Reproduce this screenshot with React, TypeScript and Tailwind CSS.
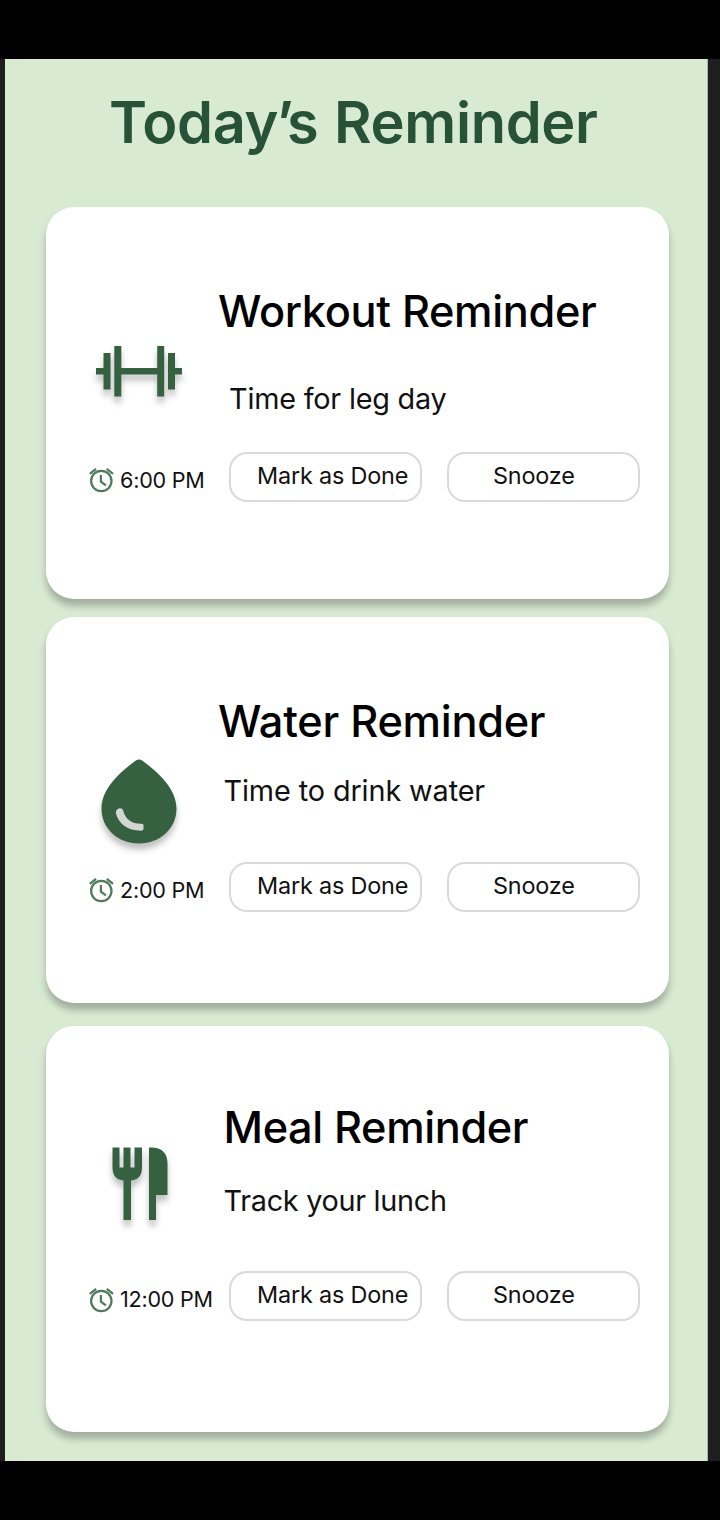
import type { ReactNode } from "react";

const iconShadow = "block drop-shadow-[0_6px_3px_rgba(0,0,0,0.25)]";

function DumbbellIcon() {
  return (
    <svg width="86" height="51" viewBox="0 0 86 51" fill="#356140" className={iconShadow}>
      <path d="M0 22h7.5v6.5H0zM7.5 7h7v36.5h-7zM18.3 0h7v50.5h-7zM25.3 22h36v6.5h-36zM61.2 0h7v50.5h-7zM72 7h7v36.5h-7zM79 22h7v6.5h-7z" />
    </svg>
  );
}

function DropIcon() {
  return (
    <svg width="76" height="85" viewBox="0 0 76 85" className={iconShadow}>
      <path
        fill="#356140"
        d="M34.5 1.8Q38 -1 41.5 1.8C57 13 75.5 30 75.5 49.5C75.5 69.5 59 84.5 38 84.5S0.5 69.5 0.5 49.5C0.5 30 19 13 34.5 1.8Z"
      />
      <path
        fill="#d4d6d4"
        d="M18 49.5C16 50 14.5 51.7 15 54.5C17.5 65 27 71.5 39.5 71.7Q42.5 71.7 42.5 69.5V66Q42.5 64.6 40 64.7C31 64.8 24.5 60.5 22.3 52C21.8 50 20.3 49 18 49.5Z"
      />
    </svg>
  );
}

function MealIcon() {
  return (
    <svg width="56" height="74" viewBox="0 0 56 74" fill="#356140" className={iconShadow}>
      <path d="M0.5 0.5h7v20h4v-20h7v20h4v-20h7.5v20q0 12-11 13v39.5h-7.5V33.5q-11-1-11-13z" />
      <path d="M37 0.5h2q16.5 0 16.5 16.5v31H44v25h-7z" />
    </svg>
  );
}

function AlarmIcon({ className }: { className: string }) {
  return (
    <svg
      width="26"
      height="26"
      viewBox="0 0 26 26"
      fill="none"
      stroke="#4f7a5b"
      strokeWidth="2.2"
      className={`shrink-0 ${className}`}
    >
      <circle cx="12.3" cy="14" r="10.2" />
      <path d="M11.9 8v6.6l5 3.8M0.8 6.8l6.2-5M17.8 1.8l6.2 5" />
    </svg>
  );
}

type Reminder = {
  title: string;
  note: string;
  time: string;
  icon: ReactNode;
  card: string;
  iconPad: string;
  body: string;
  titleClass: string;
  noteClass: string;
  alarmClass: string;
};

const reminders: Reminder[] = [
  {
    title: "Workout Reminder",
    note: "Time for leg day",
    time: "6:00 PM",
    icon: <DumbbellIcon />,
    card: "h-[392px]",
    iconPad: "pt-[139px] pl-[50px]",
    body: "pt-[78px]",
    titleClass: "ml-[-11px] tracking-[-0.33px]",
    noteClass: "mt-[44px] ml-0 tracking-[-0.2px]",
    alarmClass: "mt-0",
  },
  {
    title: "Water Reminder",
    note: "Time to drink water",
    time: "2:00 PM",
    icon: <DropIcon />,
    card: "mt-[18px] h-[386px]",
    iconPad: "pt-[142px] pl-[55px]",
    body: "pt-[78px]",
    titleClass: "ml-[-11px] tracking-[-0.26px]",
    noteClass: "mt-[26px] ml-[-5.5px] tracking-[-0.1px]",
    alarmClass: "mt-0",
  },
  {
    title: "Meal Reminder",
    note: "Track your lunch",
    time: "12:00 PM",
    icon: <MealIcon />,
    card: "mt-[23px] h-[406px]",
    iconPad: "pt-[121px] pl-[66px]",
    body: "pt-[75px]",
    titleClass: "ml-[-5.5px] tracking-[-0.38px]",
    noteClass: "mt-[30px] ml-[-5.5px] tracking-[-0.28px]",
    alarmClass: "mt-[2px]",
  },
];

function ReminderCard({ item }: { item: Reminder }) {
  return (
    <section
      className={`flex w-[623px] flex-col rounded-[28px] bg-white shadow-[0_7px_7px_rgba(0,0,0,0.25)] ${item.card}`}
    >
      <div className="flex h-[245px] shrink-0">
        <div className={`w-[183px] shrink-0 ${item.iconPad}`}>{item.icon}</div>
        <div className={`whitespace-nowrap ${item.body}`}>
          <h2 className={`text-[43.3px] leading-[52px] font-medium text-black ${item.titleClass}`}>
            {item.title}
          </h2>
          <p className={`text-[28.8px] leading-[36px] text-[#111] ${item.noteClass}`}>{item.note}</p>
        </div>
      </div>
      <div className="flex h-[50px] shrink-0">
        <div className="flex w-[183px] shrink-0 items-center gap-[5px] pt-[6px] pl-[43px] text-[21.6px] tracking-[-0.24px] whitespace-nowrap text-[#111]">
          <AlarmIcon className={item.alarmClass} />
          <span>{item.time}</span>
        </div>
        <button className="h-[50px] w-[193px] shrink-0 rounded-[18px] border-2 border-[#dadada] pb-[2px] pl-[26px] text-left text-[23.4px] leading-[44px] tracking-[-0.17px] whitespace-nowrap text-[#111]">
          Mark as Done
        </button>
        <button className="ml-[25px] h-[50px] w-[193px] shrink-0 rounded-[18px] border-2 border-[#dadada] pb-[2px] pl-[44px] text-left text-[23.4px] leading-[44px] tracking-[-0.17px] whitespace-nowrap text-[#111]">
          Snooze
        </button>
      </div>
    </section>
  );
}

export default function App() {
  return (
    <div className="h-[1520px] w-[720px] overflow-hidden bg-black py-[59px] font-['Inter',sans-serif]">
      <div className="h-[1402px] bg-[#1e1e1e] pr-[12px] pl-[5px]">
        <main className="h-full border-r border-[#a9b5a5] bg-[#d8ead2] pl-[41px]">
          <h1 className="h-[148px] pt-[28px] pl-[63px] text-[57.7px] leading-[70px] font-semibold tracking-[-0.35px] whitespace-nowrap text-[#285238] [word-spacing:1.5px]">
            Today<span className="-ml-[1.5px] tracking-[-6.5px]">’</span>s Reminder
          </h1>
          {reminders.map((item) => (
            <ReminderCard key={item.title} item={item} />
          ))}
        </main>
      </div>
    </div>
  );
}
